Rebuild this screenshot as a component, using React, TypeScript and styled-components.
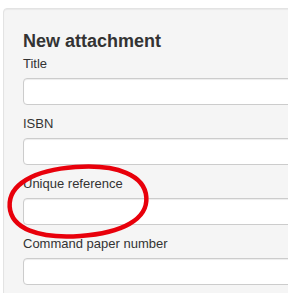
import styled, { createGlobalStyle } from "styled-components";

const GlobalStyle = createGlobalStyle`
  html, body {
    margin: 0;
    padding: 0;
    background: #fff;
    overflow: hidden;
  }
  body {
    font-family: "Liberation Sans", Helvetica, Arial, sans-serif;
    color: #333;
  }
`;

const Page = styled.div`
  padding: 8px 0 0 3px;
`;

const Well = styled.form`
  position: relative;
  width: 420px;
  min-height: 320px;
  box-sizing: border-box;
  padding: 22px 20px 0 19px;
  background: #f5f5f5;
  border: 1px solid #e3e3e3;
  border-radius: 4px;
  box-shadow: inset 0 1px 1px rgba(0, 0, 0, 0.05);
`;

const Heading = styled.h2`
  margin: 0 0 3px;
  font-size: 18px;
  line-height: 20px;
  font-weight: bold;
  color: #333;
`;

const Field = styled.div`
  display: flex;
  flex-direction: column;
  margin-bottom: 9px;
`;

const Label = styled.label`
  font-size: 13px;
  line-height: 20px;
  color: #333;
  margin-bottom: 4px;
`;

const Input = styled.input`
  width: 340px;
  height: 27px;
  box-sizing: border-box;
  padding: 4px 6px;
  background: #fff;
  border: 1px solid #ccc;
  border-radius: 4px;
  box-shadow: inset 0 1px 1px rgba(0, 0, 0, 0.075);
  font-family: inherit;
  font-size: 13px;
  outline: none;
`;

// red hand-drawn ring laid over the form
const Highlight = styled.svg`
  position: absolute;
  left: 0;
  top: 146px;
  pointer-events: none;
`;

const fields = ["Title", "ISBN", "Unique reference", "Command paper number"];

export default function App() {
  return (
    <Page>
      <GlobalStyle />
      <Well>
        <Heading>New attachment</Heading>
        {fields.map((f) => (
          <Field key={f}>
            <Label>{f}</Label>
            <Input type="text" />
          </Field>
        ))}
        <Highlight width="160" height="100" viewBox="0 0 160 100">
          <path
            d="M -68.5 0 C -68.5 -22, -42 -35, 0 -35 C 42 -35, 68.5 -22, 68.5 0 C 68.5 22, 42 34, 0 34 C -42 34, -68.5 22, -68.5 0 Z"
            fill="none"
            stroke="#e8000b"
            strokeWidth="4.5"
            transform="translate(74 47) rotate(-4)"
          />
        </Highlight>
      </Well>
    </Page>
  );
}
